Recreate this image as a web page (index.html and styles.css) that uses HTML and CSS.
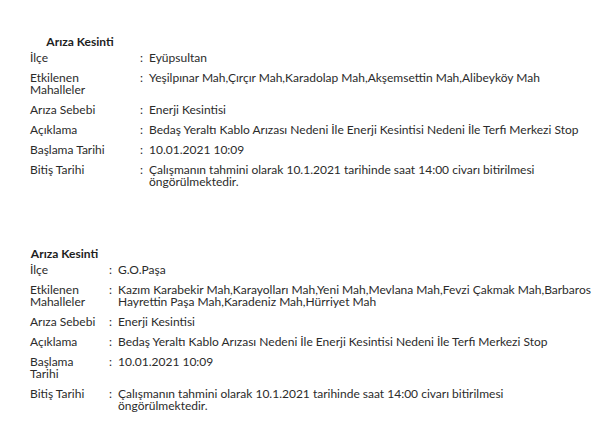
FILE: index.html
```html
<!DOCTYPE html>
<html>

<head>
    <meta name="viewport" content="width=device-width, initial-scale=1.0" charset="utf-8">
    <link rel="stylesheet" href="styles.css">
</head>

<body>
    <div class="page">
        <table class="outage wide">
            <colgroup>
                <col class="col-label">
                <col class="col-colon">
                <col>
            </colgroup>
            <tr>
                <th class="title">Arıza Kesinti</th>
                <th></th>
                <th></th>
            </tr>
            <tr>
                <td class="label">İlçe</td>
                <td class="colon">:</td>
                <td class="value">Eyüpsultan</td>
            </tr>
            <tr>
                <td class="label">Etkilenen Mahalleler</td>
                <td class="colon">:</td>
                <td class="value">Yeşilpınar Mah,Çırçır Mah,Karadolap Mah,Akşemsettin Mah,Alibeyköy Mah</td>
            </tr>
            <tr>
                <td class="label">Arıza Sebebi</td>
                <td class="colon">:</td>
                <td class="value">Enerji Kesintisi</td>
            </tr>
            <tr>
                <td class="label">Açıklama</td>
                <td class="colon">:</td>
                <td class="value">Bedaş Yeraltı Kablo Arızası Nedeni İle Enerji Kesintisi Nedeni İle Terfi Merkezi Stop</td>
            </tr>
            <tr>
                <td class="label">Başlama Tarihi</td>
                <td class="colon">:</td>
                <td class="value">10.01.2021 10:09</td>
            </tr>
            <tr>
                <td class="label">Bitiş Tarihi</td>
                <td class="colon">:</td>
                <td class="value">Çalışmanın tahmini olarak 10.1.2021 tarihinde saat 14:00 civarı bitirilmesi öngörülmektedir.</td>
            </tr>
        </table>

        <table class="outage narrow">
            <colgroup>
                <col class="col-label">
                <col class="col-colon">
                <col>
            </colgroup>
            <tr>
                <th class="title">Arıza Kesinti</th>
                <th></th>
                <th></th>
            </tr>
            <tr>
                <td class="label">İlçe</td>
                <td class="colon">:</td>
                <td class="value">G.O.Paşa</td>
            </tr>
            <tr>
                <td class="label">Etkilenen Mahalleler</td>
                <td class="colon">:</td>
                <td class="value">Kazım Karabekir Mah,Karayolları Mah,Yeni Mah,Mevlana Mah,Fevzi Çakmak Mah,Barbaros Hayrettin Paşa Mah,Karadeniz Mah,Hürriyet Mah</td>
            </tr>
            <tr>
                <td class="label">Arıza Sebebi</td>
                <td class="colon">:</td>
                <td class="value">Enerji Kesintisi</td>
            </tr>
            <tr>
                <td class="label">Açıklama</td>
                <td class="colon">:</td>
                <td class="value">Bedaş Yeraltı Kablo Arızası Nedeni İle Enerji Kesintisi Nedeni İle Terfi Merkezi Stop</td>
            </tr>
            <tr>
                <td class="label">Başlama Tarihi</td>
                <td class="colon">:</td>
                <td class="value">10.01.2021 10:09</td>
            </tr>
            <tr>
                <td class="label">Bitiş Tarihi</td>
                <td class="colon">:</td>
                <td class="value">Çalışmanın tahmini olarak 10.1.2021 tarihinde saat 14:00 civarı bitirilmesi öngörülmektedir.</td>
            </tr>
        </table>
    </div>
</body>

</html>
```
FILE: styles.css
```css
body {
    margin: 0;
    background-color: #fff;
    font-family: Lato, "Open Sans", sans-serif;
    font-size: 12px;
    line-height: 12px;
    color: #2b2b2b;
}

.page {
    padding: 35px 0 0 30px;
}

table.outage {
    border-collapse: collapse;
    table-layout: fixed;
    width: 565px;
}

table.outage + table.outage {
    margin-top: 55px;
}

table.outage th,
table.outage td {
    padding: 4px 0;
    vertical-align: top;
    text-align: left;
    font-weight: normal;
}

table.outage th.title {
    padding: 1px 6px 0 0;
    text-align: center;
    font-weight: bold;
    color: #1e1e1e;
}

table.outage .label {
    padding-right: 6px;
}

table.wide .col-label {
    width: 106px;
}

table.narrow .col-label {
    width: 75px;
}

table.outage .col-colon {
    width: 13px;
}

table.outage .colon {
    padding-left: 4px;
}
```
